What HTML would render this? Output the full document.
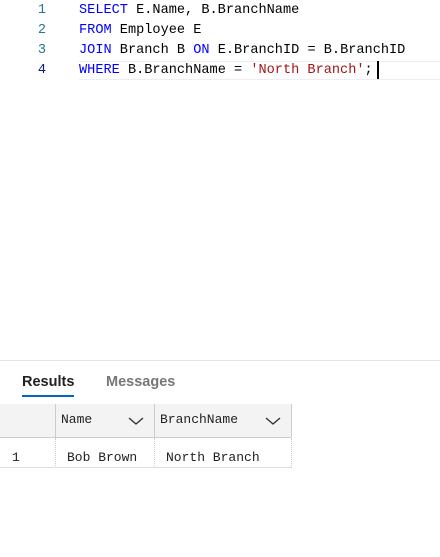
<!DOCTYPE html>
<html><head><style>
body{margin:0;width:440px;height:557px;background:#fff;position:relative;overflow:hidden;font-family:"Liberation Mono",monospace;}
.ln{position:absolute;left:0;width:46px;text-align:right;color:#237893;font-size:13.6px;}
.code{position:absolute;left:79px;font-size:13.6px;color:#000;white-space:pre;}
.k{color:#0000ff}.s{color:#a31515}
.cur{position:absolute;left:79px;right:0;top:61px;height:17px;border-top:1px solid #eee;border-bottom:1px solid #eee;}
.caret{position:absolute;left:377px;top:61px;width:2px;height:18px;background:#000;}
.div{position:absolute;left:0;right:0;top:360px;border-top:1px solid #e5e5e5;}
.tab{position:absolute;top:374px;font-family:"Liberation Sans",sans-serif;font-size:15px;}
.hdr{position:absolute;top:404px;left:0;width:291px;height:33px;background:#f3f3f3;border-bottom:1px solid #ccc;}
.vl{position:absolute;width:1px;background:#ccc;}
.cell{position:absolute;font-size:13px;color:#222;}
.chev{position:absolute;top:416px;}
</style></head><body>
<div class="cur"></div>
<div class="ln" style="top:3px">1</div><div class="ln" style="top:23px">2</div><div class="ln" style="top:43px">3</div><div class="ln" style="top:63px;color:#0b216f">4</div>
<div class="code" style="top:3px"><span class="k">SELECT</span> E.Name, B.BranchName</div>
<div class="code" style="top:23px"><span class="k">FROM</span> Employee E</div>
<div class="code" style="top:43px"><span class="k">JOIN</span> Branch B <span class="k">ON</span> E.BranchID = B.BranchID</div>
<div class="code" style="top:63px"><span class="k">WHERE</span> B.BranchName = <span class="s">'North Branch'</span>;</div>
<div class="caret"></div>
<div class="div"></div>
<div class="tab" style="left:22px;color:#222;font-weight:bold;font-size:14.5px">Results</div>
<div style="position:absolute;left:22px;top:395px;width:52px;height:2px;background:#0067c0"></div>
<div class="tab" style="left:106px;color:#777;font-weight:bold;font-size:14.5px">Messages</div>
<div class="hdr"></div>
<div class="vl" style="left:55px;top:404px;height:33px"></div>
<div class="vl" style="left:154px;top:404px;height:33px"></div>
<div class="vl" style="left:291px;top:404px;height:33px"></div>
<div class="cell" style="left:61px;top:412px">Name</div>
<div class="cell" style="left:160px;top:412px">BranchName</div>
<svg class="chev" style="left:127px" width="18" height="10"><path d="M2 2 L9 8 L16 2" stroke="#333" stroke-width="1.4" fill="none"/></svg>
<svg class="chev" style="left:264px" width="18" height="10"><path d="M2 2 L9 8 L16 2" stroke="#333" stroke-width="1.4" fill="none"/></svg>
<div style="position:absolute;left:55px;top:438px;height:30px;border-left:1px dotted #ccc"></div>
<div style="position:absolute;left:154px;top:438px;height:30px;border-left:1px dotted #ccc"></div>
<div style="position:absolute;left:291px;top:438px;height:30px;border-left:1px dotted #ccc"></div>
<div style="position:absolute;left:0;top:467px;width:291px;border-top:1px solid #ddd"></div>
<div class="cell" style="left:12px;top:450px">1</div>
<div class="cell" style="left:67px;top:450px">Bob Brown</div>
<div class="cell" style="left:166px;top:450px">North Branch</div>
</body></html>
